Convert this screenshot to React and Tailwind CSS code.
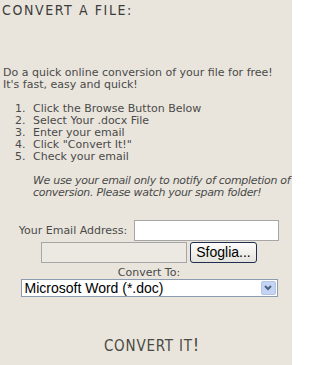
import React from 'react';

const body = "font-['Verdana','DejaVu_Sans',sans-serif]";
const cond = "font-['DejaVu_Sans_Condensed','DejaVu_Sans',sans-serif] [font-stretch:condensed]";

const steps = [
  'Click the Browse Button Below',
  'Select Your .docx File',
  'Enter your email',
  'Click "Convert It!"',
  'Check your email',
];

export default function App() {
  return (
    <div className={`w-[292px] h-[365px] overflow-hidden bg-[#e9e5dc] text-[#4a4a4a] text-[11px] leading-[12px] ${body}`}>
      {/* Title */}
      <h1 className={`pl-[2px] pt-[3px] text-[14px] leading-[14px] tracking-[1.6px] text-[#3c3c3c] ${cond}`}>
        CONVERT A FILE:
      </h1>

      {/* Intro */}
      <p className="mt-[50px] pl-[3px] whitespace-nowrap">
        Do a quick online conversion of your file for free!
        <br />
        It's fast, easy and quick!
      </p>

      <ol className="mt-[12px] pl-[15px]">
        {steps.map((s, i) => (
          <li key={i} className="flex whitespace-nowrap">
            <span className="w-[18px]">{i + 1}.</span>
            <span>{s}</span>
          </li>
        ))}
      </ol>

      <p className="mt-[12px] pl-[33px] italic whitespace-nowrap tracking-[-0.3px]">
        We use your email only to notify of completion of
        <br />
        conversion. Please watch your spam folder!
      </p>

      {/* Form */}
      <div className="mt-[21px] pl-[6px] flex flex-col items-center">
        <div className="flex items-center gap-[7px]">
          <label className="whitespace-nowrap">Your Email Address:</label>
          <input
            type="text"
            className="w-[145px] h-[21px] bg-white border border-[#a6a6a6] outline-none"
          />
        </div>

        <div className="mt-[1px] flex items-center gap-[3px]">
          <div className="w-[146px] h-[21px] bg-[#ebe9e2] border border-[#a6a6a6]" />
          <button
            type="button"
            className="w-[67px] h-[21px] rounded-[3px] border border-[#1f2f4f] bg-gradient-to-b from-[#fdfdfc] to-[#e4e2dc] text-[14px] leading-[19px] text-black font-['Liberation_Sans',Arial,sans-serif]"
          >
            Sfoglia...
          </button>
        </div>

        <div className="mt-[3px] leading-[13px]">Convert To:</div>

        <div className="relative w-[257px] h-[18px] bg-white border border-[#8c9bb0] pl-[3px] text-[14px] leading-[16px] text-black font-['Liberation_Sans',Arial,sans-serif]">
          Microsoft Word (*.doc)
          <div className="absolute right-[1px] top-[1px] w-[15px] h-[14px] rounded-[2px] bg-[#c5d4f2] border border-[#b4c4e6] flex items-center justify-center">
            <svg width="8" height="6" viewBox="0 0 8 6">
              <path d="M1 1 L4 4 L7 1" stroke="#4d6185" strokeWidth="2" fill="none" />
            </svg>
          </div>
        </div>

        <div className={`mt-[40px] ml-[6px] text-[15px] leading-[16px] tracking-[0.8px] text-[#4a4a42] ${cond}`}>
          CONVERT IT<span className="text-[18px]">!</span>
        </div>
      </div>
    </div>
  );
}
